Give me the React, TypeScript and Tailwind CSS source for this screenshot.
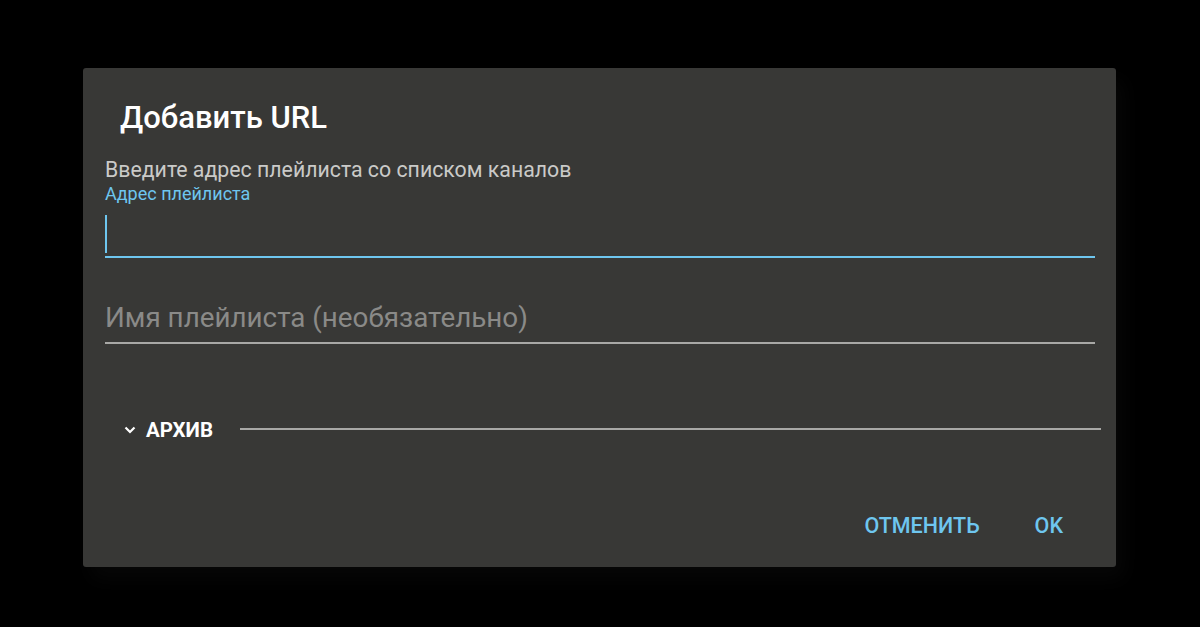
import React from "react";

export default function App() {
  return (
    <div className="w-[1200px] h-[627px] bg-black relative overflow-hidden" style={{ fontFamily: "Roboto, 'Noto Sans', sans-serif" }}>
      <div className="absolute left-[83px] top-[68px] w-[1033px] h-[499px] bg-[#383836] rounded-[3px] shadow-[8px_12px_20px_rgba(10,10,10,0.7)] flex flex-col">
        <div className="pl-[37px] pt-[32px] h-[69px] text-[31px] font-medium text-white leading-[36px]">Добавить URL</div>
        <div className="pl-[22px] pr-[21px] flex flex-col">
          <div className="mt-[21px] text-[21.3px] leading-[24px] text-[#cacac8]">Введите адрес плейлиста со списком каналов</div>
          <div className="mt-[1px] text-[18px] leading-[22px] text-[#6ec6ef]">Адрес плейлиста</div>
          <div className="h-[53px] border-b-2 border-[#6ec6ef] flex items-end pb-[3px]">
            <div className="w-[2px] h-[38px] bg-[#6ec6ef]"></div>
          </div>
          <div className="h-[86px] border-b-2 border-[#a8a8a6] flex items-end pb-[8px]">
            <span className="text-[27.8px] leading-[32px] text-[#8a8a88] whitespace-nowrap">Имя плейлиста (необязательно)</span>
          </div>
        </div>
        <div className="flex items-center h-[24px] pl-[41px] pr-[15px] mt-[74px]">
          <svg width="12" height="8" viewBox="0 0 12 8" className="mr-[10px]">
            <path d="M1.5 1.5 L6 6 L10.5 1.5" stroke="white" strokeWidth="2.2" fill="none" />
          </svg>
          <span className="text-[20.5px] font-bold text-white leading-[24px]">АРХИВ</span>
          <div className="flex-1 h-[2px] bg-[#a8a8a6] ml-[27px] mt-[-2px]"></div>
        </div>
        <div className="flex justify-end items-center mt-auto mb-[28px] pr-[53px] gap-[55px]">
          <span className="text-[21.5px] font-medium text-[#6ec6ef] leading-[26px]">ОТМЕНИТЬ</span>
          <span className="text-[21.5px] font-medium text-[#6ec6ef] leading-[26px]">OK</span>
        </div>
      </div>
    </div>
  );
}
